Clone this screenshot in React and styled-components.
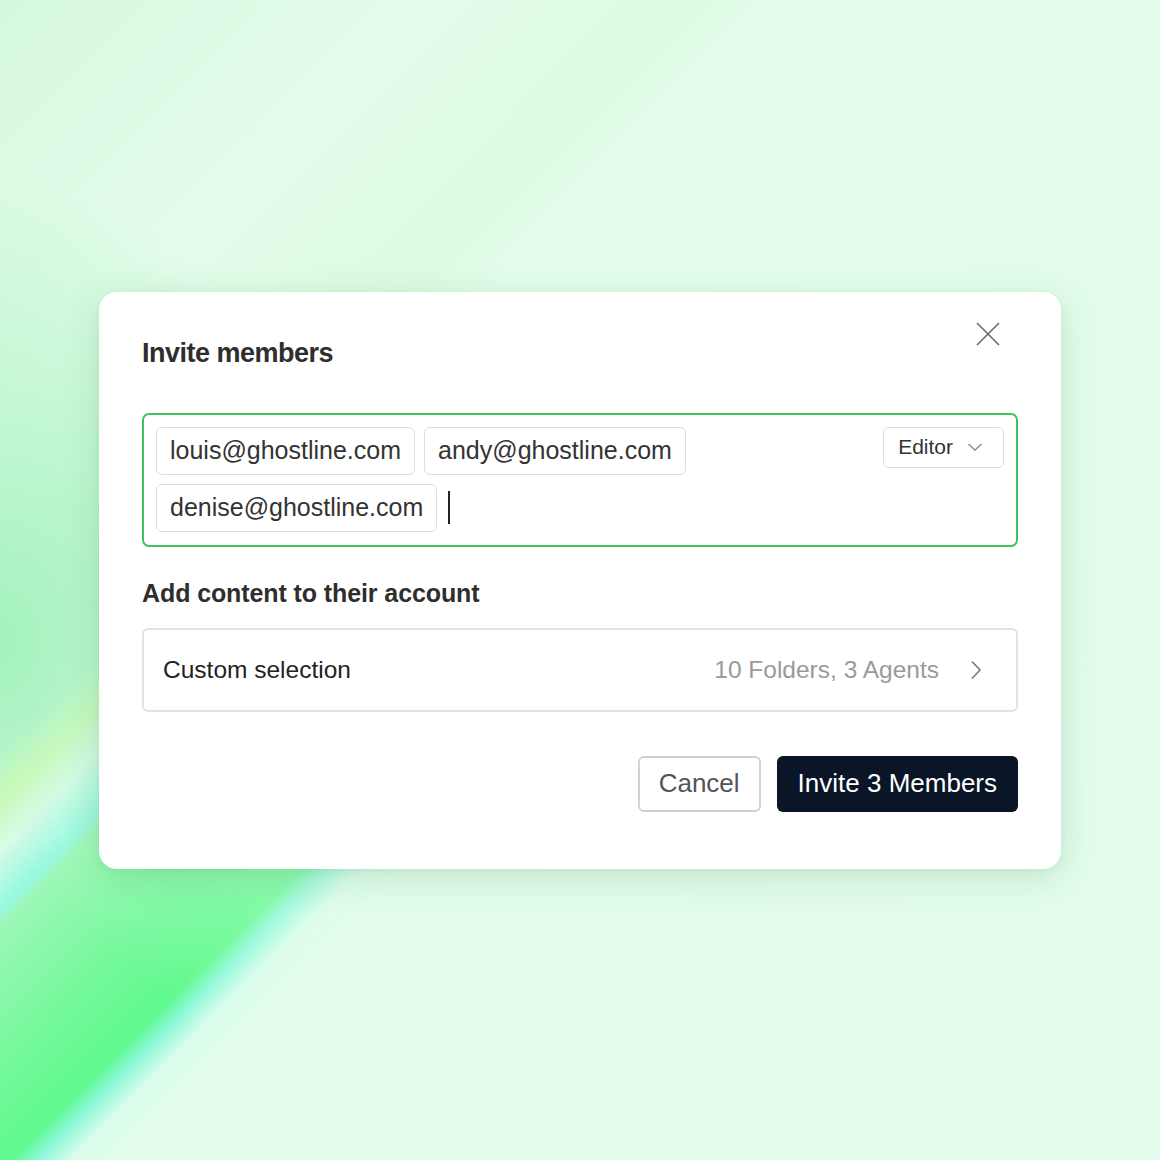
import React from "react";
import styled, { createGlobalStyle } from "styled-components";

const GlobalStyle = createGlobalStyle`
  * { box-sizing: border-box; }
  html, body { margin: 0; padding: 0; }
  body {
    font-family: "Liberation Sans", Arial, sans-serif;
    color: #2e2e2e;
  }
`;

const emails = ["louis@ghostline.com", "andy@ghostline.com", "denise@ghostline.com"];

const App = () => {
  return (
    <>
      <GlobalStyle />
      <Page>
        <Card>
          <Header>
            <Title>Invite members</Title>
            <CloseButton type="button" aria-label="Close">
              <svg width="28" height="28" viewBox="0 0 28 28" fill="none">
                <path d="M3 3L25 25M25 3L3 25" stroke="#6b6b6b" strokeWidth="1.6" />
              </svg>
            </CloseButton>
          </Header>

          <EmailField>
            <Chips>
              {emails.map((email) => (
                <Chip key={email}>{email}</Chip>
              ))}
              <Caret />
            </Chips>
            <RoleSelect type="button">
              Editor
              <svg width="16" height="10" viewBox="0 0 16 10" fill="none">
                <path d="M1.5 2L8 8L14.5 2" stroke="#8a8a8a" strokeWidth="1.3" />
              </svg>
            </RoleSelect>
          </EmailField>

          <SectionTitle>Add content to their account</SectionTitle>

          <SelectionRow type="button">
            <span>Custom selection</span>
            <SelectionMeta>
              10 Folders, 3 Agents
              <svg width="12" height="20" viewBox="0 0 12 20" fill="none">
                <path d="M2 1.5L10 10L2 18.5" stroke="#7a7a7a" strokeWidth="1.6" />
              </svg>
            </SelectionMeta>
          </SelectionRow>

          <Actions>
            <CancelButton type="button">Cancel</CancelButton>
            <InviteButton type="button">Invite 3 Members</InviteButton>
          </Actions>
        </Card>
      </Page>
    </>
  );
};

export default App;

const Page = styled.div`
  position: relative;
  min-height: 100vh;
  display: flex;
  align-items: center;
  justify-content: center;
  overflow: hidden;
  background:
    radial-gradient(ellipse 320px 460px at 0% 55%, rgba(150, 240, 180, 0.8), rgba(150, 240, 180, 0) 100%),
    linear-gradient(135deg, #d6f8df 0%, #e2fcea 18%, #dcfbe2 30%, #e3fdec 34%, #e1fdea 60%, #e2fcec 100%);

  &::before {
    content: "";
    position: absolute;
    inset: 0;
    background: linear-gradient(
      135deg,
      rgba(0, 0, 0, 0) 32.5%,
      #c9f9b6 34.5%,
      #d8fbe6 36.6%,
      #98f8e2 39.2%,
      #9cf7b6 40%,
      #7cf8a0 45%,
      #5ef98c 50.4%,
      #8ff8dc 51.6%,
      #d8fdea 53%,
      rgba(0, 0, 0, 0) 55%
    );
    -webkit-mask-image: linear-gradient(45deg, #000 0%, #000 14%, rgba(0, 0, 0, 0.6) 26%, rgba(0, 0, 0, 0) 40%);
    mask-image: linear-gradient(45deg, #000 0%, #000 14%, rgba(0, 0, 0, 0.6) 26%, rgba(0, 0, 0, 0) 40%);
  }
`;

const Card = styled.div`
  position: relative;
  z-index: 1;
  width: 962px;
  background: #ffffff;
  border-radius: 18px;
  padding: 42px 43px 57px;
  box-shadow: 0 8px 36px rgba(40, 110, 60, 0.16), 0 2px 6px rgba(40, 110, 60, 0.06);
`;

const Header = styled.div`
  display: flex;
  align-items: flex-start;
  justify-content: space-between;
`;

const Title = styled.h2`
  margin: 3px 0 0;
  font-size: 27px;
  line-height: 32px;
  font-weight: 700;
  letter-spacing: -0.5px;
  color: #2e2e2e;
`;

const CloseButton = styled.button`
  display: flex;
  padding: 0;
  margin: -14px 16px 0 0;
  border: none;
  background: none;
  cursor: pointer;
`;

const EmailField = styled.div`
  margin-top: 44px;
  display: flex;
  align-items: flex-start;
  gap: 12px;
  padding: 12px 12px 13px;
  border: 2px solid #3fc160;
  border-radius: 7px;
`;

const Chips = styled.div`
  flex: 1;
  display: flex;
  flex-wrap: wrap;
  align-items: center;
  gap: 9px;
`;

const Chip = styled.span`
  display: inline-flex;
  align-items: center;
  height: 48px;
  padding: 0 13px;
  border: 1.5px solid #dedede;
  border-radius: 6px;
  font-size: 25px;
  color: #333333;
`;

const Caret = styled.span`
  width: 2px;
  height: 33px;
  margin-left: 2px;
  background: #222222;
`;

const RoleSelect = styled.button`
  flex: none;
  display: flex;
  align-items: center;
  gap: 14px;
  height: 41px;
  padding: 0 20px 0 14px;
  border: 1.5px solid #dedede;
  border-radius: 6px;
  background: #ffffff;
  font-family: inherit;
  font-size: 21px;
  color: #333333;
`;

const SectionTitle = styled.h3`
  margin: 31px 0 0;
  font-size: 25px;
  line-height: 30px;
  font-weight: 700;
  letter-spacing: -0.1px;
  color: #2e2e2e;
`;

const SelectionRow = styled.button`
  width: 100%;
  margin-top: 20px;
  height: 84px;
  display: flex;
  align-items: center;
  justify-content: space-between;
  padding: 0 34px 0 19px;
  border: 2px solid #e3e3e3;
  border-radius: 6px;
  background: #ffffff;
  font-family: inherit;
  font-size: 24.5px;
  color: #222222;
  text-align: left;
`;

const SelectionMeta = styled.span`
  display: flex;
  align-items: center;
  gap: 31px;
  color: #9a9a9a;
`;

const Actions = styled.div`
  display: flex;
  justify-content: flex-end;
  gap: 16px;
  margin-top: 44px;
`;

const Button = styled.button`
  height: 56px;
  padding: 0 19px;
  border-radius: 6px;
  font-family: inherit;
  font-size: 26px;
  cursor: pointer;
`;

const CancelButton = styled(Button)`
  border: 2px solid #d2d2d2;
  background: #ffffff;
  color: #555555;
`;

const InviteButton = styled(Button)`
  border: none;
  padding: 0 21px;
  background: #0a1628;
  color: #ffffff;
  font-weight: 500;
`;
